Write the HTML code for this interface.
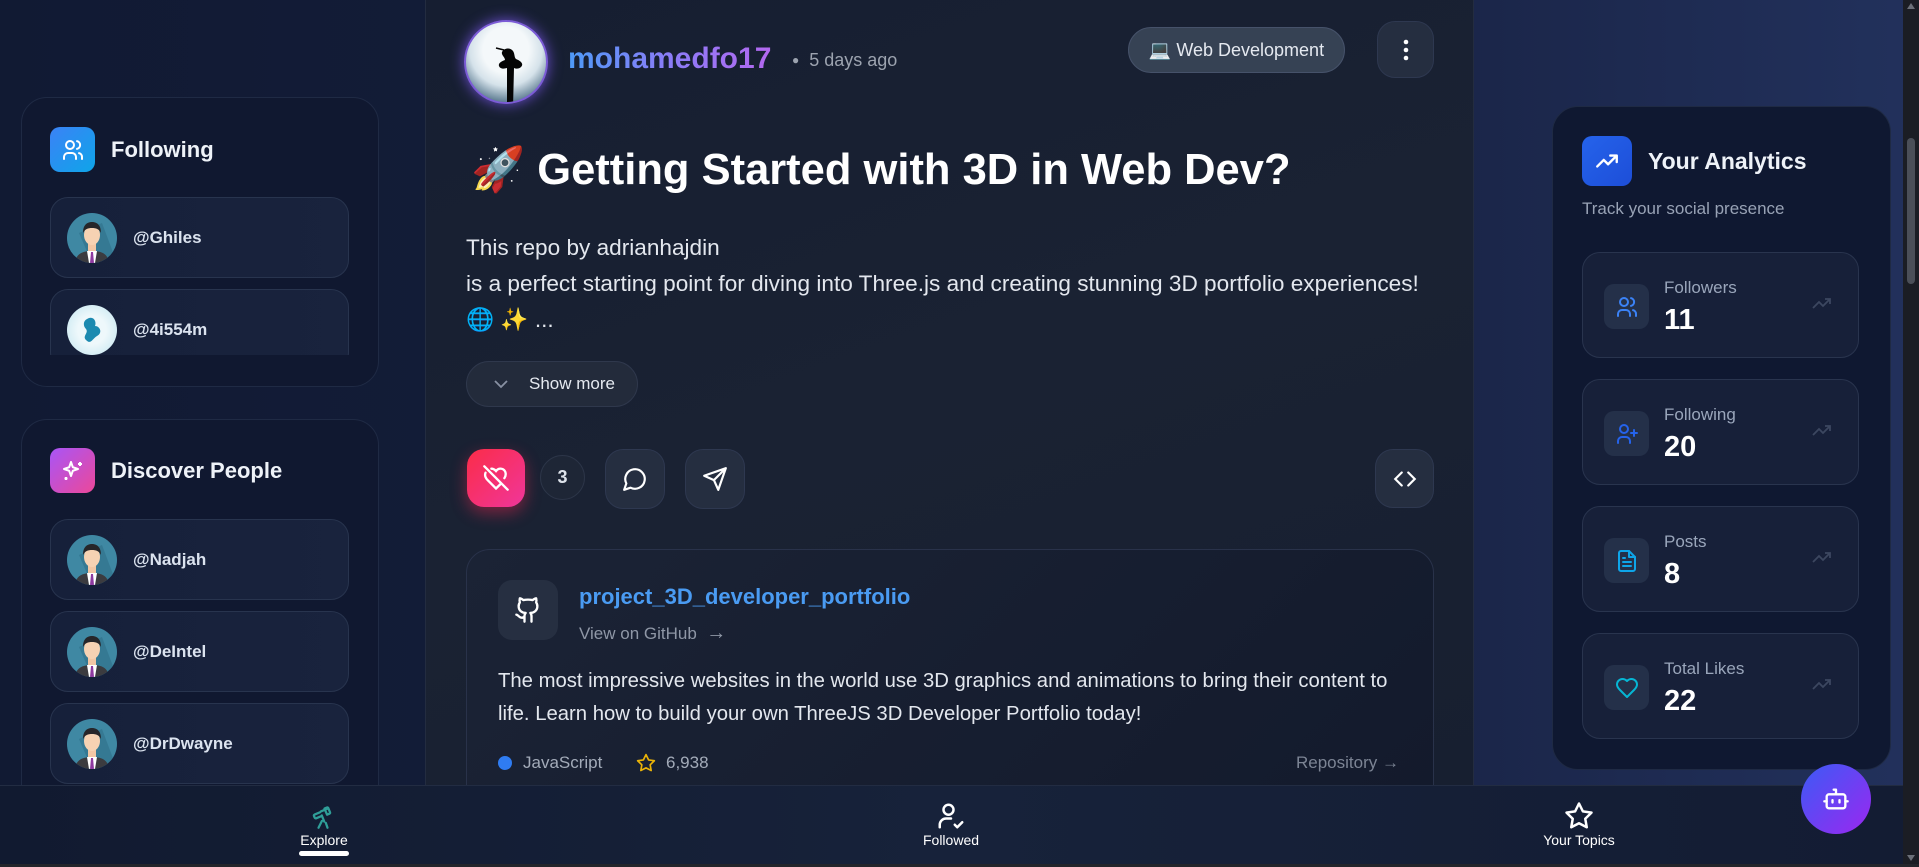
<!DOCTYPE html>
<html><head><meta charset="utf-8"><style>
*{box-sizing:border-box;margin:0;padding:0}
body{width:1919px;height:867px;overflow:hidden;font-family:"Liberation Sans",sans-serif;background:linear-gradient(90deg,#111a33 0%,#131d3a 40%,#1a2548 75%,#22315c 100%);position:relative;color:#fff}
.abs{position:absolute}
.panel{position:absolute;background:#101830;border:1px solid #1f2a44;border-radius:26px}
.item{position:absolute;left:50px;width:299px;height:81px;border:1px solid #28344e;border-radius:18px;background:linear-gradient(90deg,#16203a,#19233d)}
.item .av{position:absolute;left:16px;top:15px;width:50px;height:50px;border-radius:50%;overflow:hidden}
.item .nm{position:absolute;left:82px;top:30px;font-size:17px;font-weight:bold;color:#dbe3ef}
.ptitle{position:absolute;font-size:22px;font-weight:bold;color:#eef2f8}
.ibox{position:absolute;width:45px;height:45px;border-radius:10px;display:flex;align-items:center;justify-content:center}
.main{position:absolute;left:425px;top:0;width:1049px;height:785px;background:linear-gradient(160deg,#161e31,#1a2233 50%,#171f30);border-left:1px solid #232c40;border-right:1px solid #232c40}
.btn{position:absolute;background:#252e40;border:1px solid #2e3850;border-radius:16px;display:flex;align-items:center;justify-content:center}
.stat{position:absolute;left:1582px;width:277px;height:106px;border:1px solid #29344e;border-radius:18px;background:#172039}
.stat .ib{position:absolute;left:21px;top:31px;width:45px;height:45px;border-radius:10px;background:#243049;display:flex;align-items:center;justify-content:center}
.stat .lb{position:absolute;left:81px;top:25px;font-size:17px;color:#9aa6bb}
.stat .vl{position:absolute;left:81px;top:51px;font-size:29px;font-weight:bold;color:#fff}
.stat .tr{position:absolute;right:26px;top:43px}
.nav{position:absolute;left:0;top:785px;width:1903px;height:79px;background:linear-gradient(90deg,#111a30,#17223a 50%,#131c33);border-top:1px solid #222c42}
.nl{position:absolute;top:46px;font-size:14px;color:#fff;transform:translateX(-50%);white-space:nowrap}
</style></head><body>

<div class="panel" style="left:21px;top:97px;width:358px;height:290px;"></div>
<div class="ibox" style="left:50px;top:127px;background:linear-gradient(135deg,#3b82f6,#0ea5e9);">
<svg width="24" height="24" viewBox="0 0 24 24" fill="none" stroke="#fff" stroke-width="2" stroke-linecap="round"><circle cx="9" cy="7" r="4"/><path d="M3 21v-2a4 4 0 0 1 4-4h4a4 4 0 0 1 4 4v2M16 3.1a4 4 0 0 1 0 7.8M21 21v-2a4 4 0 0 0-3-3.9"/></svg></div>
<div class="ptitle" style="left:111px;top:137px;">Following</div>
<div style="position:absolute;left:0;top:0;width:400px;height:355px;overflow:hidden">
<div class="item" style="top:197px"><div class="av"></div><div class="nm">@Ghiles</div></div>
<div class="item" style="top:289px"><div class="av" style="background:radial-gradient(circle,#eef8fb 40%,#bfe4ef)"><svg width="50" height="50"><path d="M20 14c6-4 10 2 8 7 5 0 8 7 2 10-5 3-6 9-11 4-4-4 3-7 0-11-3-3-3-8 1-10z" fill="#1c8ab0"/></svg></div><div class="nm">@4i554m</div></div>
</div>

<div class="panel" style="left:21px;top:419px;width:358px;height:420px;"></div>
<div class="ibox" style="left:50px;top:448px;background:linear-gradient(135deg,#a855f7,#ec4899);">
<svg width="24" height="24" viewBox="0 0 24 24" fill="none" stroke="#fff" stroke-width="2" stroke-linejoin="round"><path d="M10 3l1.8 5.2L17 10l-5.2 1.8L10 17l-1.8-5.2L3 10l5.2-1.8z"/><path d="M19 3v4M17 5h4M5 18v3M3.5 19.5h3"/></svg></div>
<div class="ptitle" style="left:111px;top:458px;">Discover People</div>
<div class="item" style="top:519px"><div class="av"></div><div class="nm">@Nadjah</div></div>
<div class="item" style="top:611px"><div class="av"></div><div class="nm">@DeIntel</div></div>
<div class="item" style="top:703px"><div class="av"></div><div class="nm">@DrDwayne</div></div>

<div class="main"></div>
<div class="abs" style="left:464px;top:20px;width:84px;height:84px;border-radius:50%;border:2px solid #7b5bd6;box-shadow:0 0 14px #6d4fd0;overflow:hidden;background:radial-gradient(circle at 50% 35%,#f4f8fa 35%,#d5e2ea 55%,#5b7a90 80%,#1d3040 100%)">
<svg width="84" height="84"><path d="M36 30c2-4 8-5 11-1 2 3 1 6 3 8 5 2 8 5 5 8-2 2-5 2-7 1l-1 40h-6l0-40c-3 1-7 1-8-2-1-3 3-5 6-6 0-3-4-5-3-8z" fill="#050505"/><path d="M30 26l8 2" stroke="#050505" stroke-width="1.5"/></svg></div>
<div class="abs" style="left:568px;top:42px;font-size:30px;font-weight:bold;background:linear-gradient(90deg,#4e9af7,#8b7cf7 50%,#b368f0);-webkit-background-clip:text;color:transparent;">mohamedfo17</div>
<div class="abs" style="left:792px;top:50px;font-size:18px;color:#9ca3af;"><span style="font-size:12px;position:relative;top:-2px">●</span>&nbsp; 5 days ago</div>
<div class="abs" style="left:1128px;top:27px;width:217px;height:46px;border-radius:23px;background:#364254;border:1px solid #46526a;font-size:18px;color:#e5e9f0;display:flex;align-items:center;justify-content:center">💻&nbsp;Web Development</div>
<div class="btn" style="left:1377px;top:21px;width:57px;height:57px;border-radius:18px"><svg width="6" height="22"><circle cx="3" cy="3" r="2.3" fill="#fff"/><circle cx="3" cy="11" r="2.3" fill="#fff"/><circle cx="3" cy="19" r="2.3" fill="#fff"/></svg></div>

<div class="abs" style="left:471px;top:144px;font-size:43.5px;font-weight:bold;color:#fff;">🚀 Getting Started with 3D in Web Dev?</div>
<div class="abs" style="left:466px;top:230px;font-size:22.6px;line-height:36px;color:#e3e7ee;width:1000px;">This repo by adrianhajdin<br>is a perfect starting point for diving into Three.js and creating stunning 3D portfolio experiences!<br>🌐 ✨ ...</div>
<div class="abs" style="left:466px;top:361px;width:172px;height:46px;border-radius:23px;background:#232b3b;border:1px solid #2f384c;font-size:17px;color:#e5e9f0;display:flex;align-items:center;padding-left:26px"><svg width="16" height="10" style="margin-right:20px"><path d="M2 2l6 6 6-6" fill="none" stroke="#8891a3" stroke-width="1.8"/></svg>Show more</div>

<div class="abs" style="left:467px;top:449px;width:58px;height:58px;border-radius:17px;background:linear-gradient(135deg,#fb2c48,#f0369a);box-shadow:0 6px 16px rgba(245,40,80,.45);display:flex;align-items:center;justify-content:center"><svg width="28" height="28" viewBox="0 0 24 24" fill="none" stroke="#fff" stroke-width="2" stroke-linecap="round"><path d="M2 2l20 20M16.5 16.6L12 21l-7-7C3 12 2 10 3 7.5M8 4c1.5 0 3 .8 4 2 1.5-2 4-2.6 6-1.5 2.6 1.5 3 5 1.2 7.6"/></svg></div>
<div class="abs" style="left:540px;top:455px;width:45px;height:45px;border-radius:50%;background:#1e2636;border:1px solid #2c3548;font-size:18px;font-weight:bold;color:#dde2ea;display:flex;align-items:center;justify-content:center">3</div>
<div class="btn" style="left:605px;top:449px;width:60px;height:60px;border-radius:18px"><svg width="26" height="26" viewBox="0 0 24 24" fill="none" stroke="#fff" stroke-width="2" stroke-linejoin="round"><path d="M7.9 20A9 9 0 1 0 4 16.1L2 22z"/></svg></div>
<div class="btn" style="left:685px;top:449px;width:60px;height:60px;border-radius:18px"><svg width="26" height="26" viewBox="0 0 24 24" fill="none" stroke="#fff" stroke-width="2" stroke-linejoin="round"><path d="M22 2L11 13M22 2l-7 20-4-9-9-4z"/></svg></div>
<div class="btn" style="left:1375px;top:449px;width:59px;height:59px;border-radius:18px"><svg width="26" height="26" viewBox="0 0 24 24" fill="none" stroke="#fff" stroke-width="2" stroke-linecap="round"><path d="M9 6l-6 6 6 6M15 6l6 6-6 6"/></svg></div>

<div class="abs" style="left:466px;top:549px;width:968px;height:260px;border-radius:24px;border:1px solid #29324a;background:linear-gradient(135deg,#1b2335,#131a2c);"></div>
<div class="abs" style="left:498px;top:580px;width:60px;height:60px;border-radius:14px;background:#262f41;display:flex;align-items:center;justify-content:center"><svg width="28" height="28" viewBox="0 0 24 24" fill="none" stroke="#fff" stroke-width="2" stroke-linecap="round" stroke-linejoin="round"><path d="M15 22v-4a4.8 4.8 0 0 0-1-3.5c3 0 6-2 6-5.5.08-1.25-.27-2.48-1-3.5.28-1.15.28-2.350 0-3.5 0 0-1 0-3 1.5-2.64-.5-5.36-.5-8 0C6 2 5 2 5 2c-.3 1.15-.3 2.35 0 3.5A5.4 5.4 0 0 0 4 9c0 3.5 3 5.5 6 5.5-.39.49-.68 1.05-.85 1.650S8.930 17.38 9 18v4M9 18c-4.51 2-5-2-7-2"/></svg></div>
<div class="abs" style="left:579px;top:584px;font-size:22px;font-weight:bold;color:#4a9bf2;">project_3D_developer_portfolio</div>
<div class="abs" style="left:579px;top:622px;font-size:17px;color:#8f97a6;">View on GitHub &nbsp;<span style="font-size:20px">→</span></div>
<div class="abs" style="left:498px;top:665px;font-size:20.3px;line-height:33px;color:#e3e7ee;width:900px;">The most impressive websites in the world use 3D graphics and animations to bring their content to life. Learn how to build your own ThreeJS 3D Developer Portfolio today!</div>
<div class="abs" style="left:498px;top:756px;width:14px;height:14px;border-radius:50%;background:#2f7cf2"></div>
<div class="abs" style="left:523px;top:753px;font-size:17px;color:#a3abb9;">JavaScript</div>
<svg class="abs" style="left:636px;top:753px" width="20" height="20" viewBox="0 0 24 24" fill="none" stroke="#eab308" stroke-width="2" stroke-linejoin="round"><path d="M12 2l3.1 6.3 6.9 1-5 4.9 1.2 6.8L12 17.8 5.8 21l1.2-6.8-5-4.9 6.9-1z"/></svg>
<div class="abs" style="left:666px;top:753px;font-size:17px;color:#a3abb9;">6,938</div>
<div class="abs" style="left:1296px;top:753px;font-size:17px;color:#7c8494;">Repository →</div>

<div class="panel" style="left:1552px;top:106px;width:339px;height:664px;background:#0f1831;"></div>
<div class="ibox" style="left:1582px;top:136px;width:50px;height:50px;border-radius:10px;background:linear-gradient(135deg,#2563eb,#1d4ed8);"><svg width="26" height="26" viewBox="0 0 24 24" fill="none" stroke="#fff" stroke-width="2.2" stroke-linecap="round" stroke-linejoin="round"><path d="M3 17l6-6 4 4 8-8M15 7h6v6"/></svg></div>
<div class="abs" style="left:1648px;top:148px;font-size:23px;font-weight:bold;color:#eef2f8;">Your Analytics</div>
<div class="abs" style="left:1582px;top:199px;font-size:17px;color:#98a2b5;">Track your social presence</div>

<div class="stat" style="top:252px"><div class="ib"><svg width="24" height="24" viewBox="0 0 24 24" fill="none" stroke="#3b82f6" stroke-width="2" stroke-linecap="round"><circle cx="9" cy="7" r="4"/><path d="M3 21v-2a4 4 0 0 1 4-4h4a4 4 0 0 1 4 4v2M16 3.1a4 4 0 0 1 0 7.8M21 21v-2a4 4 0 0 0-3-3.9"/></svg></div><div class="lb">Followers</div><div class="vl">11</div><div class="tr"><svg width="20" height="14" viewBox="0 0 20 14" fill="none" stroke="#3c4760" stroke-width="1.8"><path d="M1 12l6-6 4 4 7-7M13 3h5v5"/></svg></div></div>
<div class="stat" style="top:379px"><div class="ib"><svg width="24" height="24" viewBox="0 0 24 24" fill="none" stroke="#2563eb" stroke-width="2" stroke-linecap="round"><circle cx="9" cy="7" r="4"/><path d="M3 21v-2a4 4 0 0 1 4-4h4a4 4 0 0 1 4 4v2M19 8v6M16 11h6"/></svg></div><div class="lb">Following</div><div class="vl">20</div><div class="tr"><svg width="20" height="14" viewBox="0 0 20 14" fill="none" stroke="#3c4760" stroke-width="1.8"><path d="M1 12l6-6 4 4 7-7M13 3h5v5"/></svg></div></div>
<div class="stat" style="top:506px"><div class="ib"><svg width="24" height="24" viewBox="0 0 24 24" fill="none" stroke="#0ea5e9" stroke-width="2" stroke-linecap="round" stroke-linejoin="round"><path d="M14 2H6a2 2 0 0 0-2 2v16a2 2 0 0 0 2 2h12a2 2 0 0 0 2-2V8z"/><path d="M14 2v6h6M16 13H8M16 17H8M10 9H8"/></svg></div><div class="lb">Posts</div><div class="vl">8</div><div class="tr"><svg width="20" height="14" viewBox="0 0 20 14" fill="none" stroke="#3c4760" stroke-width="1.8"><path d="M1 12l6-6 4 4 7-7M13 3h5v5"/></svg></div></div>
<div class="stat" style="top:633px"><div class="ib"><svg width="24" height="24" viewBox="0 0 24 24" fill="none" stroke="#06b6d4" stroke-width="2" stroke-linejoin="round"><path d="M19 14c1.5-1.5 3-3.2 3-5.5A5.5 5.5 0 0 0 16.5 3c-1.8 0-3 .5-4.5 2-1.5-1.5-2.7-2-4.5-2A5.5 5.5 0 0 0 2 8.5c0 2.3 1.5 4 3 5.5l7 7z"/></svg></div><div class="lb">Total Likes</div><div class="vl">22</div><div class="tr"><svg width="20" height="14" viewBox="0 0 20 14" fill="none" stroke="#3c4760" stroke-width="1.8"><path d="M1 12l6-6 4 4 7-7M13 3h5v5"/></svg></div></div>

<div class="nav">
<svg class="abs" style="left:309px;top:17px" width="28" height="27" viewBox="0 0 24 24" fill="none" stroke="#2f9e98" stroke-width="2" stroke-linecap="round" stroke-linejoin="round"><path d="M10.1 7.5l6.2-2.6M13.1 16.5L10.9 11M16.6 4.3l1.6 3.9a1 1 0 0 1-.5 1.3l-2.1.9-2.3-5.5 2.1-.9a1 1 0 0 1 1.2.3zM10.7 11.6l-4.8 2a1 1 0 0 1-1.3-.6l-.6-1.4a1 1 0 0 1 .5-1.3l4.8-2M14.5 17.7L16 22M11 16l-3 6"/></svg>
<div class="nl" style="left:324px;color:#fff">Explore</div>
<div class="abs" style="left:299px;top:65px;width:50px;height:5px;border-radius:3px;background:#fff"></div>
<svg class="abs" style="left:936px;top:15px" width="30" height="30" viewBox="0 0 24 24" fill="none" stroke="#fff" stroke-width="2" stroke-linecap="round" stroke-linejoin="round"><circle cx="10" cy="7" r="4"/><path d="M3 21v-2a5 5 0 0 1 5-5h4M15 19l2 2 4-4"/></svg>
<div class="nl" style="left:951px">Followed</div>
<svg class="abs" style="left:1564px;top:15px" width="30" height="30" viewBox="0 0 24 24" fill="none" stroke="#fff" stroke-width="2" stroke-linejoin="round"><path d="M12 2l3.1 6.3 6.9 1-5 4.9 1.2 6.8L12 17.8 5.8 21l1.2-6.8-5-4.9 6.9-1z"/></svg>
<div class="nl" style="left:1579px">Your Topics</div>
</div>
<div class="abs" style="left:0;top:864px;width:1919px;height:3px;background:#23252b"></div>

<div class="abs" style="left:1801px;top:764px;width:70px;height:70px;border-radius:50%;background:linear-gradient(135deg,#3b5bf6,#9b27f0);display:flex;align-items:center;justify-content:center"><svg width="28" height="28" viewBox="0 0 24 24" fill="none" stroke="#fff" stroke-width="2" stroke-linecap="round"><rect x="4" y="8" width="16" height="12" rx="2"/><path d="M12 8V4M10 4h2M2 14h2M20 14h2M9 13v2M15 13v2"/></svg></div>

<div class="abs" style="left:1903px;top:0;width:16px;height:864px;background:#1b1d24"></div>
<div class="abs" style="left:1907px;top:138px;width:8px;height:146px;border-radius:4px;background:#4b4f58"></div>
<svg class="abs" style="left:1906px;top:2px" width="10" height="8"><path d="M5 1l4 6H1z" fill="#6b6f78"/></svg>
<svg class="abs" style="left:1906px;top:854px" width="10" height="8"><path d="M1 1h8L5 7z" fill="#6b6f78"/></svg>

<svg width="0" height="0" style="position:absolute"><defs><symbol id="man" viewBox="0 0 50 50"><rect width="50" height="50" fill="#3f88a3"/><path d="M50 50H25L12 20 35 10z" fill="#2f6f88" opacity=".6"/><path d="M8 50c1-9 7-12 17-12s16 3 17 12z" fill="#3b3b3f"/><path d="M20 38h10l-2 12h-6z" fill="#fff"/><path d="M24 39h2l1 11h-4z" fill="#8e3aa0"/><rect x="21" y="28" width="8" height="10" fill="#f2c7a5"/><ellipse cx="25" cy="22" rx="8" ry="10" fill="#f6d2b3"/><path d="M16 20c0-8 4-11 9-11s9 3 9 11c-2-4-5-5-9-5s-7 1-9 5z" fill="#26262a"/></symbol></defs></svg>
<script>
document.querySelectorAll('.item .av').forEach(function(a){if(!a.innerHTML.trim()){a.innerHTML='<svg width="50" height="50"><use href="#man"/></svg>';}});
</script>
</body></html>
